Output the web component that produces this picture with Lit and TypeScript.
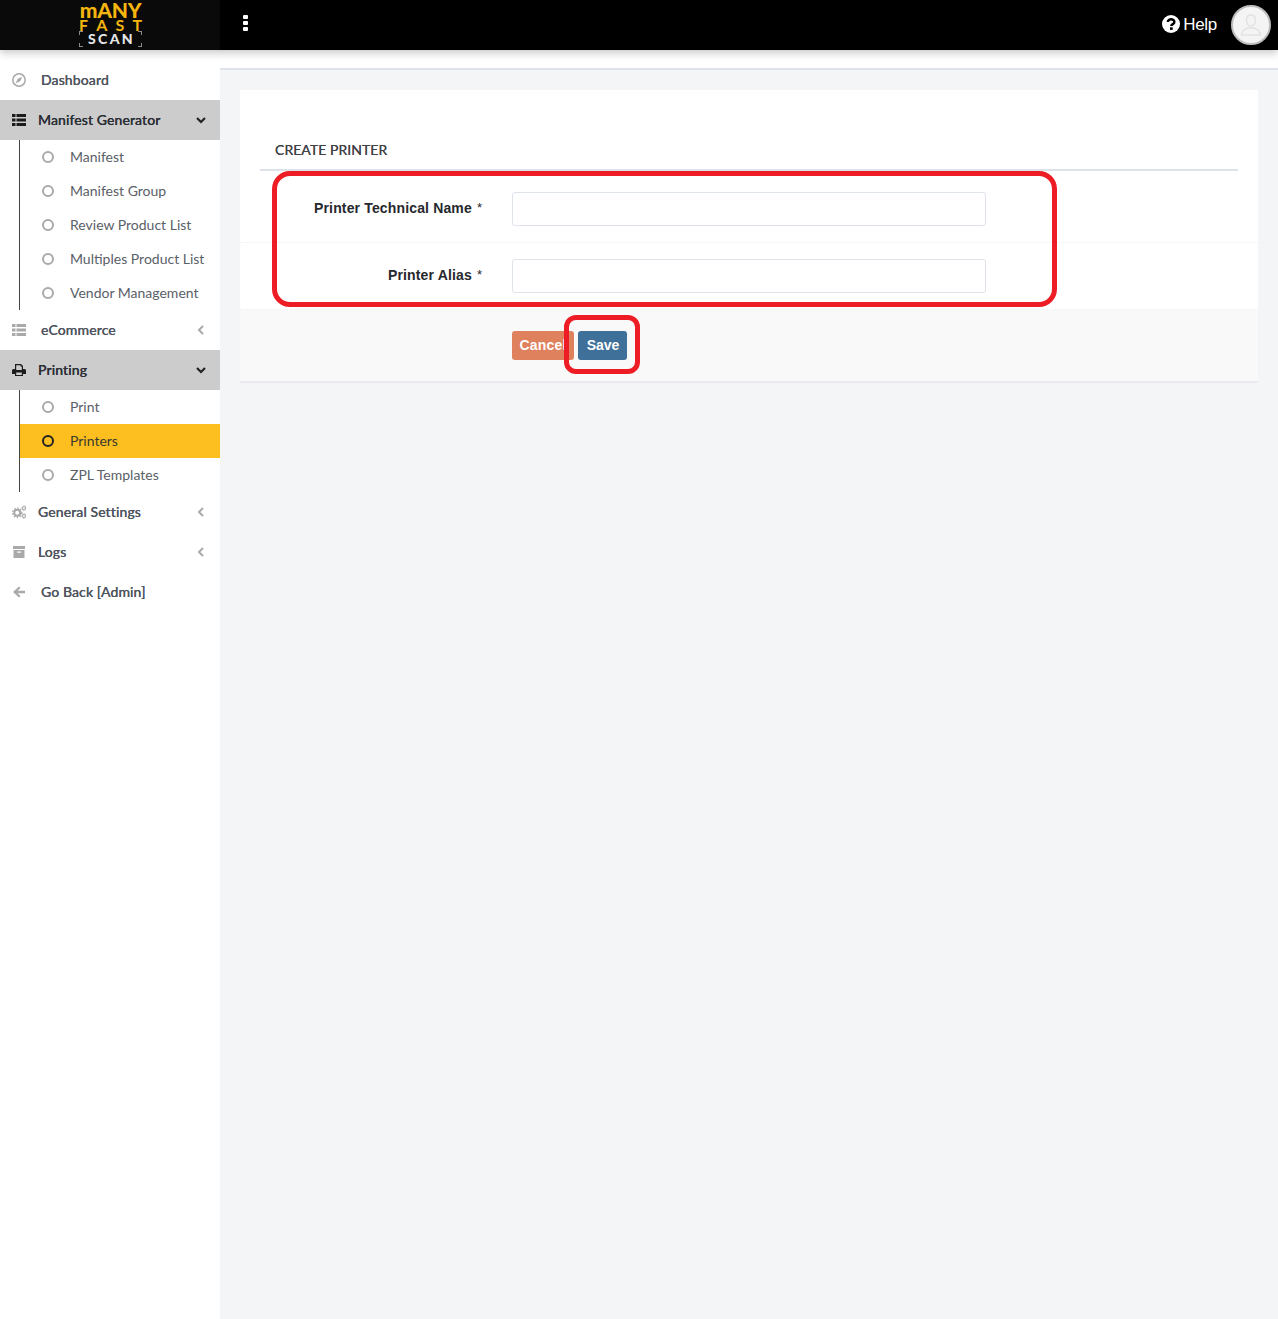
import { LitElement, html, css, svg } from "lit";
import { customElement } from "lit/decorators.js";

const chevDown = svg`<path d="M2 4 L6 8 L10 4" fill="none" stroke="currentColor" stroke-width="2.2"/>`;
const chevLeft = svg`<path d="M8 2 L4 6 L8 10" fill="none" stroke="currentColor" stroke-width="2"/>`;

const icons: Record<string, unknown> = {
  compass: svg`<circle cx="7" cy="7" r="6.200" fill="none" stroke="currentColor" stroke-width="1.500"/><path d="M10.300 3.700 L8.200 8.200 L3.700 10.300 L5.800 5.800 Z" fill="currentColor"/>`,
  list: svg`<path fill="currentColor" d="M0 1h3.500v3H0zM4.500 1H14v3H4.500zM0 5.500h3.500v3H0zM4.500 5.500H14v3H4.500zM0 10h3.500v3H0zM4.500 10H14v3H4.500z"/>`,
  print: svg`<path fill="currentColor" fill-rule="evenodd" d="M3 1h6l2 2v3h1.500A1.500 1.500 0 0 1 14 7.500V11h-3v2H3v-2H0V7.500A1.500 1.500 0 0 1 1.500 6H3zM4.200 2.200V7h5.600V3.500H8.500V2.200zM4.200 9.500v2.400h5.600V9.500z"/>`,
  gears: svg`<circle cx="5.200" cy="7.800" r="3" fill="none" stroke="currentColor" stroke-width="2"/><circle cx="5.200" cy="7.800" r="4.600" fill="none" stroke="currentColor" stroke-width="1.300" stroke-dasharray="1.600 1.400"/><circle cx="12" cy="3.200" r="1.500" fill="none" stroke="currentColor" stroke-width="1.100"/><circle cx="12" cy="3.200" r="2.500" fill="none" stroke="currentColor" stroke-width=".8" stroke-dasharray="1 1"/><circle cx="12" cy="11" r="1.500" fill="none" stroke="currentColor" stroke-width="1.100"/><circle cx="12" cy="11" r="2.500" fill="none" stroke="currentColor" stroke-width=".8" stroke-dasharray="1 1"/>`,
  archive: svg`<path fill="currentColor" d="M1 1h12v3H1zM1.500 5h11v8h-11z"/><path fill="#fff" d="M5 6.500h4v1.200H5z"/>`,
  back: svg`<path fill="currentColor" d="M7 1.500 L1 7 L7 12.500 L8.500 11 L5.500 8.200 H13 V5.800 H5.500 L8.500 3 Z"/>`,
};

type Item = { label: string; icon: string; indent?: boolean; chev?: "down" | "left"; open?: boolean; sub?: { label: string; active?: boolean }[] };

const nav: Item[] = [
  { label: "Dashboard", icon: "compass", indent: true },
  { label: "Manifest Generator", icon: "list", chev: "down", open: true, sub: [
    { label: "Manifest" }, { label: "Manifest Group" }, { label: "Review Product List" },
    { label: "Multiples Product List" }, { label: "Vendor Management" } ] },
  { label: "eCommerce", icon: "list", indent: true, chev: "left" },
  { label: "Printing", icon: "print", chev: "down", open: true, sub: [
    { label: "Print" }, { label: "Printers", active: true }, { label: "ZPL Templates" } ] },
  { label: "General Settings", icon: "gears", chev: "left" },
  { label: "Logs", icon: "archive", chev: "left" },
  { label: "Go Back [Admin]", icon: "back", indent: true },
];

@customElement("app-root")
export class AppRoot extends LitElement {
  static styles = css`
    :host { display: block; width: 1278px; height: 1319px; position: relative; overflow: hidden; background: #f4f5f7; font-family: "Lato", sans-serif; }
    .top { height: 50px; background: #000; display: flex; align-items: center; position: relative; z-index: 2; box-shadow: 0 3px 8px rgba(0,0,0,.22); }
    .brand { width: 220px; height: 50px; background: #0a0a0a; display: flex; flex-direction: column; align-items: center; flex: none; }
    .logo { width: 63px; margin-left: 1px; padding-top: 2px; display: flex; flex-direction: column; align-items: stretch; font-family: "Lato", sans-serif; color: #f5b50f; }
    .l1 { font-size: 21px; height: 15px; line-height: 16px; text-align: center; font-weight: 900; letter-spacing: -.2px; }
    .l2 { font-size: 16px; height: 13px; line-height: 14px; margin-top: 1px; display: flex; justify-content: space-between; font-weight: 700; }
    .l3 { font-size: 14px; height: 16px; line-height: 15px; color: #e6e6e6; letter-spacing: 2.400px; text-indent: 2px; text-align: center; font-weight: 900;
      --c: linear-gradient(#8a8a8a, #8a8a8a);
      background:
        var(--c) left top / 4px 1px no-repeat, var(--c) left top / 1px 4px no-repeat,
        var(--c) right top / 4px 1px no-repeat, var(--c) right top / 1px 4px no-repeat,
        var(--c) left bottom / 4px 1px no-repeat, var(--c) left bottom / 1px 4px no-repeat,
        var(--c) right bottom / 4px 1px no-repeat, var(--c) right bottom / 1px 4px no-repeat; }
    .dots { margin-left: 23px; display: flex; flex-direction: column; gap: 2px; margin-top: -5px; }
    .dots i { width: 5px; height: 4px; background: #fff; display: block; border-radius: 1px; }
    .right { margin-left: auto; display: flex; align-items: center; padding-right: 7px; color: #fff; font-family: "Liberation Sans", sans-serif; font-size: 17px; letter-spacing: -.3px; }
    .help { display: flex; align-items: center; gap: 3px; margin-right: 14px; margin-top: -1px; }
    .help svg { margin-top: -2px; }
    .avatar { width: 36px; height: 36px; border-radius: 50%; background: #f4f4f4; border: 2px solid #bdbdbd; display: flex; align-items: center; justify-content: center; }
    .body { display: flex; height: 1269px; }
    .side { width: 220px; flex: none; background: #fff; padding-top: 10px; box-sizing: border-box; }
    .row { height: 40px; display: flex; align-items: center; padding: 0 13px 0 12px; font-size: 14px; color: #50565f; font-weight: 500; letter-spacing: .1px; }
    .row.open { background: #ccc; color: #2b2f36; }
    .row .ic { width: 14px; height: 14px; flex: none; color: #a9a9a9; margin-right: 12px; }
    .row.open .ic { color: #1c1c1c; }
    .row.ind .ic { margin-right: 15px; }
    .row .lab { flex: 1; padding-bottom: 2px; text-shadow: 0 0 .4px currentColor; }
    .chev { width: 12px; height: 12px; color: #a9a9a9; flex: none; }
    .row.open .chev { color: #222; }
    .subs { margin-left: 19px; border-left: 1px solid #444; }
    .sub { height: 34px; display: flex; align-items: center; font-size: 14px; color: #5a6068; padding-left: 22px; }
    .sub span { padding-bottom: 2px; }
    .sub.active { background: #fdbf1f; color: #3a3a30; }
    .ring { width: 8px; height: 8px; border: 2px solid #aaa; border-radius: 50%; margin-right: 16px; flex: none; }
    .sub.active .ring { border-color: #222; }
    .main { flex: 1; min-width: 0; }
    .sub-head { height: 18px; background: #fff; border-bottom: 2px solid #dfe4ec; }
    .content { padding: 20px 20px 0; }
    .card { background: #fff; border-bottom: 2px solid #e8eaee; }
    .head { margin: 0 20px; height: 81px; box-sizing: border-box; border-bottom: 2px solid #dde2ea; padding: 51px 15px 0; font-size: 14px; line-height: 17px; letter-spacing: .05px; color: #3f4247; text-shadow: 0 0 .3px currentColor; }
    .f { display: flex; align-items: center; }
    .f1 { height: 72px; border-bottom: 1px dotted #eceef1; box-sizing: border-box; padding-top: 4px; }
    .f2 { height: 67px; border-bottom: 1px dotted #eceef1; box-sizing: border-box; }
    .lbl { width: 242px; text-align: right; font-family: "Liberation Sans", sans-serif; font-weight: 700; font-size: 14px; letter-spacing: .15px; color: #26282d; flex: none; padding-bottom: 2px; }
    .lbl span { font-weight: 400; font-size: 13px; margin-left: 1px; letter-spacing: 0; position: relative; top: -1px; }
    .inp { margin-left: 30px; width: 474px; height: 34px; box-sizing: border-box; border: 1px solid #dfe3ea; border-radius: 3px; background: #fff; }
    .foot { height: 71px; background: #f9f9f9; display: flex; padding: 21px 0 0 272px; box-sizing: border-box; gap: 4px; }
    .btn { height: 29px; box-sizing: border-box; padding-bottom: 2px; border-radius: 3px; color: #fff; font-family: "Liberation Sans", sans-serif; font-weight: 700; font-size: 14px; display: flex; align-items: center; justify-content: center; }
    .cancel { width: 62px; background: #e0815e; letter-spacing: .2px; }
    .save { width: 49px; background: #3e7099; padding-left: 1px; }
    .mark { position: absolute; box-sizing: border-box; border: 5px solid #ee1c25; z-index: 3; pointer-events: none; }
    .m1 { left: 272px; top: 171px; width: 785px; height: 136px; border-radius: 18px; }
    .m2 { left: 564px; top: 315px; width: 76px; height: 59px; border-radius: 12px; }
  `;

  render() {
    return html`
      <div class="top">
        <div class="brand">
          <div class="logo">
            <div class="l1">mANY</div>
            <div class="l2"><span>F</span><span>A</span><span>S</span><span>T</span></div>
            <div class="l3">SCAN</div>
          </div>
        </div>
        <div class="dots"><i></i><i></i><i></i></div>
        <div class="right">
          <div class="help">
            <svg width="18" height="18" viewBox="0 0 18 18"><circle cx="9" cy="9" r="9" fill="#fff"/><path d="M5.800 7 C5.800 3.300 12.400 3.300 12.400 7 C12.400 9.200 9.300 9 9.300 11" fill="none" stroke="#000" stroke-width="2.400"/><rect x="8" y="12.300" width="2.700" height="2.600" fill="#000"/></svg>
            <span>Help</span>
          </div>
          <div class="avatar">
            <svg width="26" height="26" viewBox="0 0 26 26"><g fill="none" stroke="#e2e2e2" stroke-width="1.500"><path d="M13 3c3 0 4.500 2.200 4.500 5s-1.500 6-4.500 6-4.500-3.200-4.500-6 1.500-5 4.500-5z"/><path d="M3.500 23c0-5 4-5.500 6.500-7h6c2.500 1.500 6.500 2 6.500 7z"/></g></svg>
          </div>
        </div>
      </div>
      <div class="body">
        <nav class="side">
          ${nav.map((it) => html`
            <div class="row ${it.open ? "open" : ""} ${it.indent ? "ind" : ""}">
              <svg class="ic" viewBox="0 0 14 14">${icons[it.icon]}</svg>
              <span class="lab">${it.label}</span>
              ${it.chev ? html`<svg class="chev" viewBox="0 0 12 12">${it.chev === "down" ? chevDown : chevLeft}</svg>` : ""}
            </div>
            ${it.sub ? html`<div class="subs">${it.sub.map((s) => html`<div class="sub ${s.active ? "active" : ""}"><i class="ring"></i><span>${s.label}</span></div>`)}</div>` : ""}
          `)}
        </nav>
        <main class="main">
          <div class="sub-head"></div>
          <div class="content">
            <section class="card">
              <div class="head">CREATE PRINTER</div>
              <div class="f f1"><div class="lbl">Printer Technical Name <span>*</span></div><div class="inp"></div></div>
              <div class="f f2"><div class="lbl">Printer Alias <span>*</span></div><div class="inp"></div></div>
              <div class="foot"><div class="btn cancel">Cancel</div><div class="btn save">Save</div></div>
            </section>
          </div>
        </main>
      </div>
      <div class="mark m1"></div>
      <div class="mark m2"></div>
    `;
  }
}
